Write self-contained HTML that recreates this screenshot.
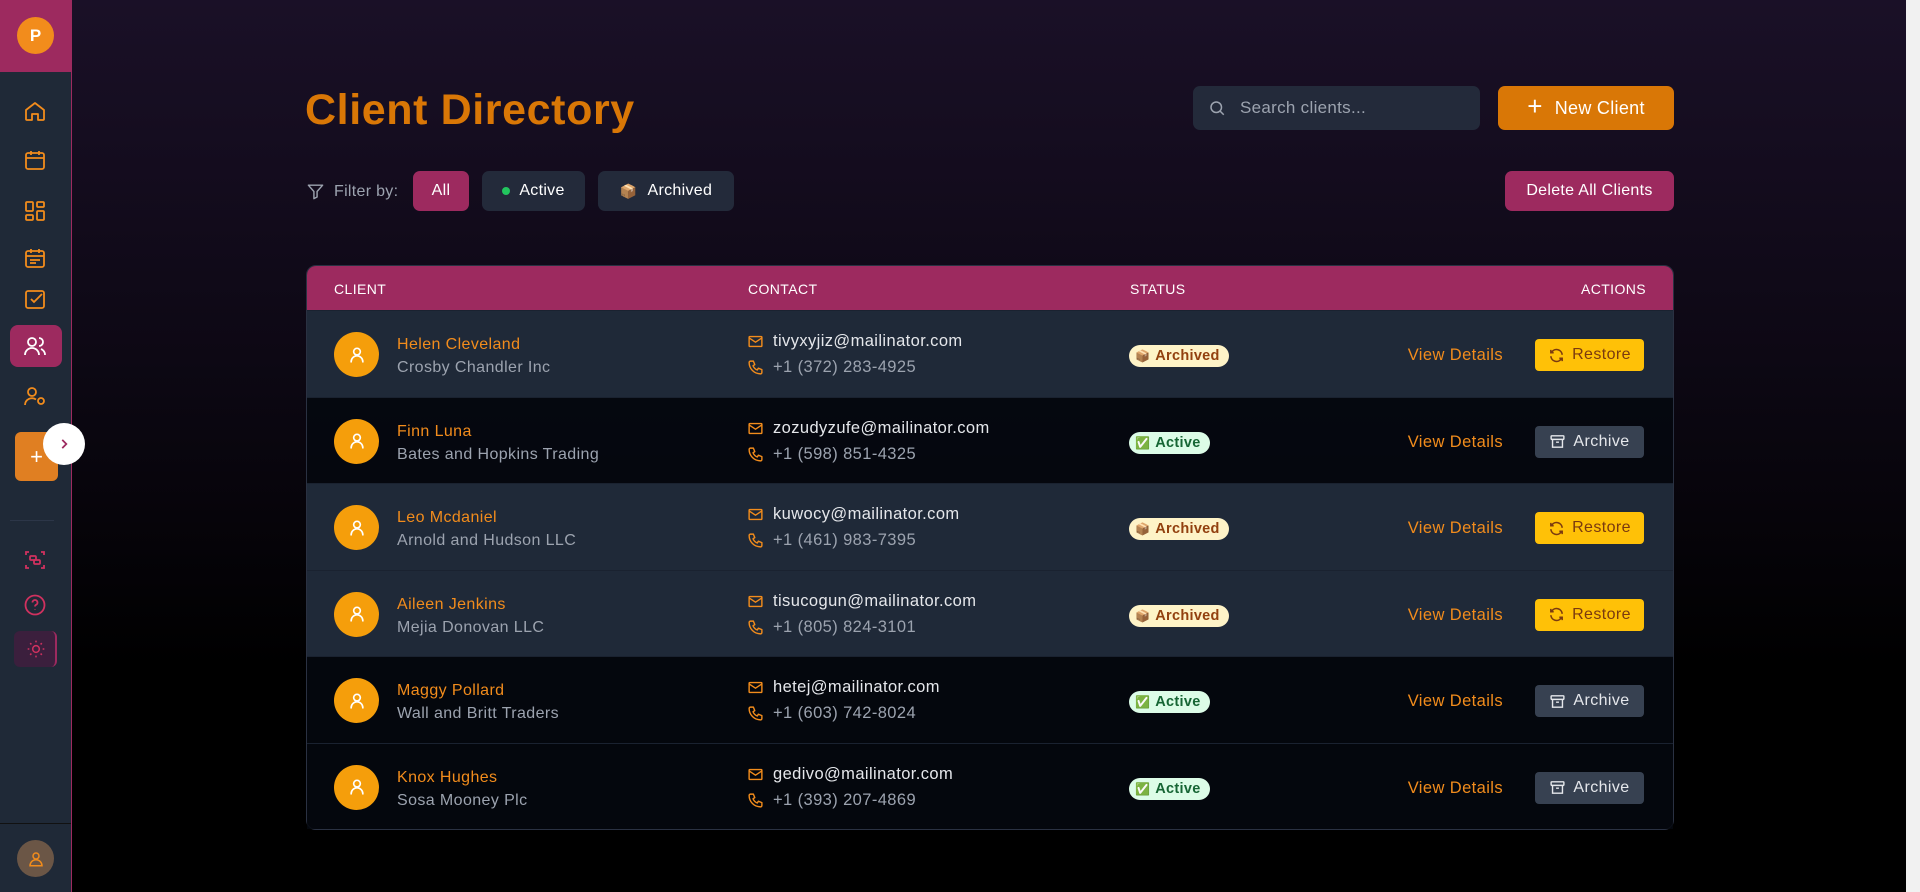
<!DOCTYPE html>
<html><head><meta charset="utf-8"><style>
*{box-sizing:border-box;margin:0;padding:0}
body{width:1920px;height:892px;overflow:hidden;font-family:"Liberation Sans",sans-serif;background:linear-gradient(180deg,#1a1027 0%,#0d0814 40%,#000 75%);position:relative;color:#fff}
.abs{position:absolute}
.sb{left:0;top:0;width:72px;height:892px;background:#1f2937;border-right:1px solid #9d2a5f}
.sbh{left:0;top:0;width:71px;height:72px;background:#9d2a5f}
.ic{position:absolute;left:23px;width:24px;height:24px}
svg{display:block}
.btn{position:absolute;border-radius:7px;display:flex;align-items:center;justify-content:center;font-size:16px;letter-spacing:.3px}
.row{position:absolute;left:307px;width:1366px;height:86.5px;border-top:1px solid #1a2230;letter-spacing:.4px}
.av{position:absolute;left:27px;top:21px;width:45px;height:45px;border-radius:50%;background:#f59e0b;display:flex;align-items:center;justify-content:center}
.nm{position:absolute;left:90px;top:25px;color:#f28c1c;font-size:16px}
.co{position:absolute;left:90px;top:48px;color:#9ca3af;font-size:16px}
.em{position:absolute;left:440px;top:21px;color:#e5e7eb;font-size:16.5px;display:flex;align-items:center;gap:9px}
.ph{position:absolute;left:440px;top:47px;color:#9ca3af;font-size:16.5px;display:flex;align-items:center;gap:9px}
.bd{position:absolute;left:822px;top:34px;height:22px;border-radius:11px;font-size:14.5px;font-weight:bold;display:flex;align-items:center;padding:0 9px 0 6px;gap:5px;letter-spacing:.3px}
.arc{background:#fef3c7;color:#92400e}
.act{background:#dcfce7;color:#166534}
.vd{position:absolute;right:170px;top:35px;color:#f28c1c;font-size:16.5px}
.ab{position:absolute;left:1228px;top:28px;width:109px;height:32px;border-radius:4px;display:flex;align-items:center;justify-content:center;gap:7px;font-size:16px}
.rs{background:#ffc107;color:#7a3a10}
.ar{background:#374151;color:#e5e7eb}
</style></head><body>
<div class="abs sb"></div>
<div class="abs sbh"></div>
<div class="abs" style="left:17px;top:17px;width:37px;height:37px;border-radius:50%;background:#f28c1c;color:#fff;font-weight:bold;font-size:17px;display:flex;align-items:center;justify-content:center">P</div>
<svg class="ic" style="top:99px" viewBox="0 0 24 24" fill="none" stroke="#f28c1c" stroke-width="1.8" stroke-linejoin="round"><path d="M3 11l9-7 9 7v9a1 1 0 0 1-1 1h-5v-6h-6v6H4a1 1 0 0 1-1-1z"/></svg>
<svg class="ic" style="top:148px" viewBox="0 0 24 24" fill="none" stroke="#f28c1c" stroke-width="1.8"><rect x="3" y="5" width="18" height="16" rx="2"/><path d="M3 10h18M8 3v4M16 3v4"/></svg>
<svg class="ic" style="top:199px" viewBox="0 0 24 24" fill="none" stroke="#f28c1c" stroke-width="1.8"><rect x="3" y="3" width="7" height="9" rx="1"/><rect x="14" y="3" width="7" height="5" rx="1"/><rect x="14" y="12" width="7" height="9" rx="1"/><rect x="3" y="16" width="7" height="5" rx="1"/></svg>
<svg class="ic" style="top:246px" viewBox="0 0 24 24" fill="none" stroke="#f28c1c" stroke-width="1.8"><rect x="3" y="5" width="18" height="16" rx="2"/><path d="M3 10h18M8 3v4M16 3v4M7 14h10M7 17h6"/></svg>
<svg class="ic" style="top:287px" viewBox="0 0 24 24" fill="none" stroke="#f28c1c" stroke-width="1.8"><rect x="3" y="4" width="18" height="17" rx="2"/><path d="M8 12l3 3 8-8"/></svg>
<div class="abs" style="left:10px;top:325px;width:52px;height:42px;border-radius:8px;background:#9d2a5f"></div>
<svg class="ic" style="top:334px" viewBox="0 0 24 24" fill="none" stroke="#fff" stroke-width="1.8"><circle cx="9" cy="8" r="4"/><path d="M2 21a7 7 0 0 1 14 0M16 4a4 4 0 0 1 0 8M22 21a6 6 0 0 0-4-6"/></svg>
<svg class="ic" style="top:384px" viewBox="0 0 24 24" fill="none" stroke="#f28c1c" stroke-width="1.8"><circle cx="9" cy="8" r="4"/><path d="M2 21a7 7 0 0 1 11-5.5"/><circle cx="18" cy="17" r="3"/></svg>
<div class="abs" style="left:15px;top:432px;width:43px;height:49px;border-radius:6px;background:#e07f22;color:#fff;font-size:22px;display:flex;align-items:center;justify-content:center">+</div>
<div class="abs" style="left:43px;top:423px;width:42px;height:42px;border-radius:50%;background:#fff;display:flex;align-items:center;justify-content:center"><svg width="14" height="14" viewBox="0 0 24 24" fill="none" stroke="#9d2a5f" stroke-width="3"><path d="M9 5l7 7-7 7"/></svg></div>
<div class="abs" style="left:10px;top:520px;width:44px;height:1px;background:#2c3648"></div>
<svg class="ic" style="top:548px" viewBox="0 0 24 24" fill="none" stroke="#d0315f" stroke-width="1.8"><path d="M3 7V4h3M18 4h3v3M21 17v3h-3M6 20H3v-3"/><rect x="7" y="8" width="6" height="4" rx="1"/><rect x="11" y="12" width="6" height="4" rx="1"/></svg>
<svg class="ic" style="top:593px" viewBox="0 0 24 24" fill="none" stroke="#d0315f" stroke-width="1.8"><circle cx="12" cy="12" r="9.5"/><path d="M9.5 9.5a2.5 2.5 0 1 1 3.5 2.3c-.7.4-1 1-1 1.7M12 16.5v.5"/></svg>
<div class="abs" style="left:14px;top:631px;width:43px;height:36px;border-radius:6px;background:#3b1f3d;border-right:2px solid #9d2a5f"></div>
<svg class="abs" style="left:26px;top:639px" width="20" height="20" viewBox="0 0 24 24" fill="none" stroke="#d0315f" stroke-width="1.8"><circle cx="12" cy="12" r="4"/><path d="M12 2v2M12 20v2M2 12h2M20 12h2M5 5l1.5 1.5M17.5 17.5L19 19M5 19l1.5-1.5M17.5 6.5L19 5"/></svg>
<div class="abs" style="left:0;top:823px;width:71px;height:1px;background:#111"></div>
<div class="abs" style="left:17px;top:840px;width:37px;height:37px;border-radius:50%;background:#6b5646;display:flex;align-items:center;justify-content:center"><svg width="18" height="18" viewBox="0 0 24 24" fill="none" stroke="#f28c1c" stroke-width="2"><circle cx="12" cy="8" r="4"/><path d="M4 21a8 8 0 0 1 16 0z"/></svg></div>

<div class="abs" style="left:1906px;top:0;width:14px;height:892px;background:#f1f1f1"></div>

<div class="abs" style="left:305px;top:86px;font-size:43px;font-weight:bold;color:#d97706;letter-spacing:0.6px">Client Directory</div>
<div class="abs" style="left:1193px;top:86px;width:287px;height:44px;border-radius:7px;background:#232a3a;display:flex;align-items:center;padding-left:15px;gap:14px;color:#9ca3af;font-size:17px;letter-spacing:.3px"><svg width="18" height="18" viewBox="0 0 24 24" fill="none" stroke="#9ca3af" stroke-width="2"><circle cx="11" cy="11" r="7"/><path d="M16 16l5 5"/></svg>Search clients...</div>
<div class="btn" style="left:1498px;top:86px;width:176px;height:44px;background:#d97706;color:#fff;font-size:18px;gap:12px"><span style="font-size:26px;font-weight:300;margin-top:-3px">+</span>New Client</div>
<div class="abs" style="left:306px;top:182px;display:flex;align-items:center;gap:9px;color:#9ca3af;font-size:16px;letter-spacing:.3px"><svg width="19" height="19" viewBox="0 0 24 24" fill="none" stroke="#9ca3af" stroke-width="1.8" stroke-linejoin="round"><path d="M3 4h18l-7 8v7l-4 2v-9z"/></svg>Filter by:</div>
<div class="btn" style="left:413px;top:171px;width:56px;height:40px;background:#9d2a5f;color:#fff">All</div>
<div class="btn" style="left:482px;top:171px;width:103px;height:40px;background:#232a3a;color:#fff;gap:9px"><span style="width:8px;height:8px;border-radius:50%;background:#22c55e"></span>Active</div>
<div class="btn" style="left:598px;top:171px;width:136px;height:40px;background:#232a3a;color:#fff;gap:10px"><span style="font-size:14px">📦</span>Archived</div>
<div class="btn" style="left:1505px;top:171px;width:169px;height:40px;background:#9d2a5f;color:#fff">Delete All Clients</div>

<div class="abs" style="left:306px;top:265px;width:1368px;height:565px;border:1px solid #2a3142;border-radius:10px;overflow:hidden">
<div style="height:45px;background:#9d2a5f;position:relative;font-size:14px;color:#fff;letter-spacing:.4px">
<span class="abs" style="left:27px;top:15px">CLIENT</span>
<span class="abs" style="left:441px;top:15px">CONTACT</span>
<span class="abs" style="left:823px;top:15px">STATUS</span>
<span class="abs" style="right:27px;top:15px">ACTIONS</span>
</div>
</div>

<div id="rows"></div>
<script>
var d=[["Helen Cleveland","Crosby Chandler Inc","tivyxyjiz@mailinator.com","+1 (372) 283-4925",0],
["Finn Luna","Bates and Hopkins Trading","zozudyzufe@mailinator.com","+1 (598) 851-4325",1],
["Leo Mcdaniel","Arnold and Hudson LLC","kuwocy@mailinator.com","+1 (461) 983-7395",0],
["Aileen Jenkins","Mejia Donovan LLC","tisucogun@mailinator.com","+1 (805) 824-3101",0],
["Maggy Pollard","Wall and Britt Traders","hetej@mailinator.com","+1 (603) 742-8024",1],
["Knox Hughes","Sosa Mooney Plc","gedivo@mailinator.com","+1 (393) 207-4869",1]];
var h="";
var mail='<svg width="17" height="17" viewBox="0 0 24 24" fill="none" stroke="#f28c1c" stroke-width="2"><rect x="3" y="5" width="18" height="14" rx="1"/><path d="M3 7l9 6 9-6"/></svg>';
var ph='<svg width="17" height="17" viewBox="0 0 24 24" fill="none" stroke="#f28c1c" stroke-width="2" stroke-linejoin="round"><path d="M5 3h4l2 5-2.5 1.5a11 11 0 0 0 6 6L16 13l5 2v4a2 2 0 0 1-2 2A16 16 0 0 1 3 5a2 2 0 0 1 2-2z"/></svg>';
var user='<svg width="20" height="20" viewBox="0 0 24 24" fill="none" stroke="#fff" stroke-width="2"><circle cx="12" cy="8" r="4"/><path d="M5 21v-1a7 7 0 0 1 14 0v1"/></svg>';
var rest='<svg width="17" height="17" viewBox="0 0 24 24" fill="none" stroke="#7a3a10" stroke-width="2.2"><path d="M20 11a8 8 0 0 0-14.5-4M4 4v4h4M4 13a8 8 0 0 0 14.5 4M20 20v-4h-4"/></svg>';
var arch='<svg width="17" height="17" viewBox="0 0 24 24" fill="none" stroke="#e5e7eb" stroke-width="2"><rect x="3" y="4" width="18" height="5" rx="1"/><path d="M5 9v11h14V9M10 13h4"/></svg>';
d.forEach(function(r,i){
var top=310+i*86.5;
h+='<div class="row" style="top:'+top+'px;background:'+(r[4]==0?'#1f2938':'rgba(5,8,15,0.85)')+'">'+
'<div class="av">'+user+'</div><div class="nm">'+r[0]+'</div><div class="co">'+r[1]+'</div>'+
'<div class="em">'+mail+r[2]+'</div><div class="ph">'+ph+r[3]+'</div>'+
(r[4]?'<div class="bd act"><span style="font-size:12px">✅</span>Active</div>':'<div class="bd arc"><span style="font-size:12px">📦</span>Archived</div>')+
'<div class="vd">View Details</div>'+
(r[4]?'<div class="ab ar">'+arch+'Archive</div>':'<div class="ab rs">'+rest+'Restore</div>')+
'</div>';});
document.getElementById("rows").innerHTML=h;
</script>
</body></html>
